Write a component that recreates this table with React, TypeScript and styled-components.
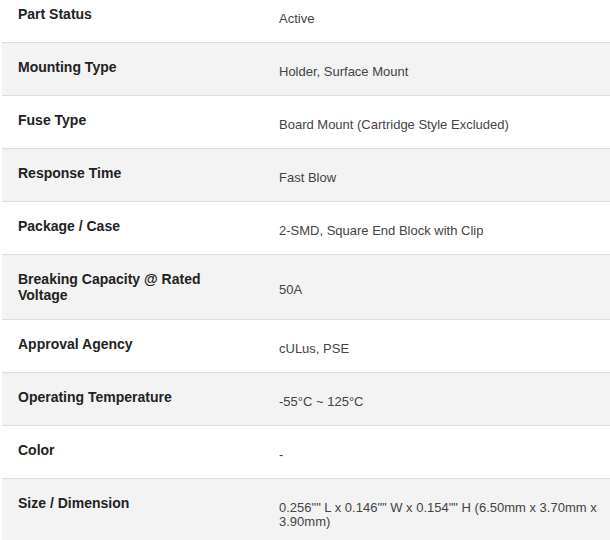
import React from "react";
import styled, { createGlobalStyle } from "styled-components";

const GlobalStyle = createGlobalStyle`
  html, body {
    margin: 0;
    padding: 0;
    background: #ffffff;
    font-family: "Liberation Sans", Arial, sans-serif;
  }
`;

const Table = styled.div`
  margin: -10px 0 0 2px;
  width: 608px;
  display: flex;
  flex-direction: column;
  font-size: 14px;
`;

const Row = styled.div<{ $alt: boolean }>`
  display: grid;
  grid-template-columns: 261px 1fr;
  background: ${(p) => (p.$alt ? "#f3f3f3" : "#ffffff")};
  border-bottom: 1px solid #dddddd;
`;

const Label = styled.div`
  align-self: start;
  padding: 16px 16px 16px 16px;
  line-height: 16px;
  font-size: 14px;
  font-weight: 700;
  color: #222222;
`;

const Value = styled.div`
  align-self: center;
  padding: 22px 8px 16px 16px;
  line-height: 14px;
  font-size: 13px;
  color: #444444;
`;

const specs: [string, string][] = [
  ["Part Status", "Active"],
  ["Mounting Type", "Holder, Surface Mount"],
  ["Fuse Type", "Board Mount (Cartridge Style Excluded)"],
  ["Response Time", "Fast Blow"],
  ["Package / Case", "2-SMD, Square End Block with Clip"],
  ["Breaking Capacity @ Rated Voltage", "50A"],
  ["Approval Agency", "cULus, PSE"],
  ["Operating Temperature", "-55°C ~ 125°C"],
  ["Color", "-"],
  [
    "Size / Dimension",
    '0.256"" L x 0.146"" W x 0.154"" H (6.50mm x 3.70mm x 3.90mm)',
  ],
];

export default function App() {
  return (
    <>
      <GlobalStyle />
      <Table>
        {specs.map(([label, value], i) => (
          <Row key={label} $alt={i % 2 === 1}>
            <Label>{label}</Label>
            <Value>{value}</Value>
          </Row>
        ))}
      </Table>
    </>
  );
}
